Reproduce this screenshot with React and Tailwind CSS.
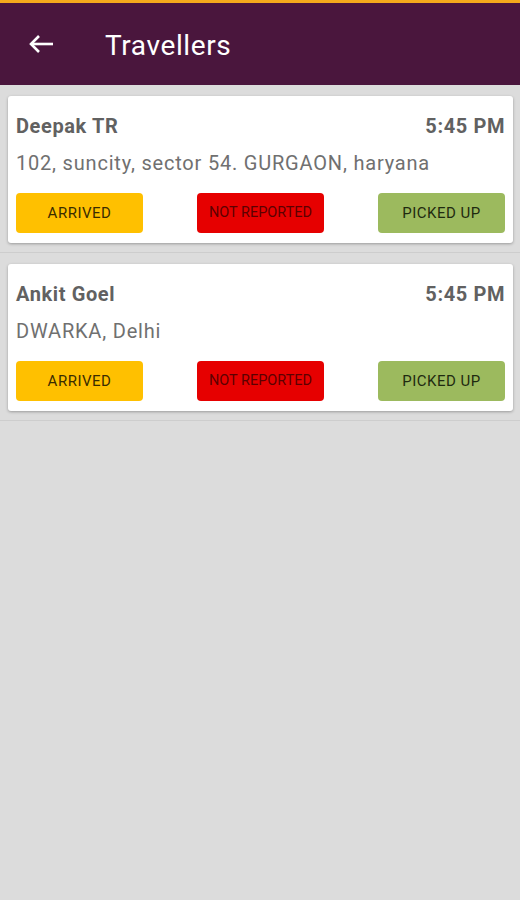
const TRAVELLERS = [
  { name: "Deepak TR", time: "5:45 PM", address: "102, suncity, sector 54. GURGAON, haryana" },
  { name: "Ankit Goel", time: "5:45 PM", address: "DWARKA, Delhi" },
];

function BackArrow() {
  return (
    <svg width="26" height="20" viewBox="0 0 26 20" fill="none" stroke="white" strokeWidth="2.6">
      <path d="M3 10H25" />
      <path d="M11 2L3 10L11 18" strokeLinejoin="miter" />
    </svg>
  );
}

function TravellerCard({ t }) {
  return (
    <div className="rounded-[3px] bg-white px-2 pt-[18px] pb-[10px] shadow-[0_1px_3px_rgba(0,0,0,0.3)]">
      <div className="flex items-center justify-between text-[20px] leading-6 font-bold tracking-[0.6px] text-[#616161]">
        <span>{t.name}</span>
        <span>{t.time}</span>
      </div>
      <div className="mt-[13px] text-[20px] leading-6 tracking-[0.8px] text-[#707070]">{t.address}</div>
      <div className="mt-[18px] flex justify-between">
        <button className="flex h-10 w-[127px] items-center justify-center rounded-[4px] bg-[#ffc000] text-[15px] tracking-[0.5px] text-[#3a2c00]">
          ARRIVED
        </button>
        <button className="flex h-10 w-[127px] items-center justify-center rounded-[4px] bg-[#e60000] text-[14.5px] text-[#5c0000]">
          NOT REPORTED
        </button>
        <button className="flex h-10 w-[127px] items-center justify-center rounded-[4px] bg-[#9cba5e] text-[15px] tracking-[0.5px] text-[#1f2a10]">
          PICKED UP
        </button>
      </div>
    </div>
  );
}

export default function App() {
  return (
    <div className="min-h-[900px] bg-[#dcdcdc] font-['Roboto',sans-serif]">
      {/* status strip + toolbar */}
      <div className="h-[3px] bg-[#f4a91c]" />
      <div className="flex h-[82px] items-center bg-[#4a163d] pl-[28px]">
        <BackArrow />
        <span className="ml-[51px] pt-1 text-[28px] tracking-[0.6px] text-white">Travellers</span>
      </div>

      {TRAVELLERS.map((t) => (
        <div key={t.name} className="border-b border-[#cdcdcd] pt-[11px] pr-[7px] pb-[9px] pl-2">
          <TravellerCard t={t} />
        </div>
      ))}
    </div>
  );
}
